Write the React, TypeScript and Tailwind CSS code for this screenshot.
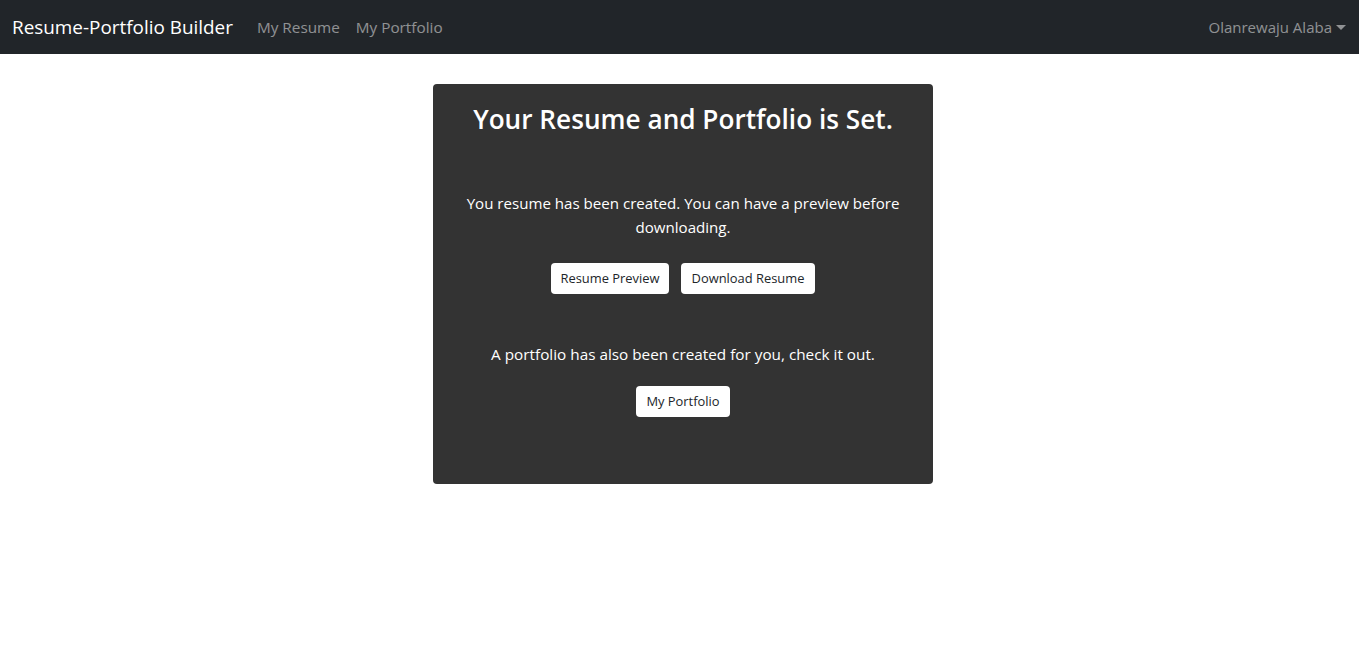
import { FC } from 'react';

const App: FC = () => {
  return (
    <div className="min-h-screen bg-white font-['Open_Sans',sans-serif] text-[#212529]">
      <nav className="flex h-[54px] items-center justify-between bg-[#212529] pl-3 pr-[13px]">
        <div className="flex items-center">
          <a className="mr-[24px] text-[18.9px] text-white">Resume-Portfolio Builder</a>
          <a className="mr-[16px] text-[15.3px] text-white/50">My Resume</a>
          <a className="text-[15.3px] text-white/50">My Portfolio</a>
        </div>
        <button className="flex items-center text-[15px] text-white/50">
          Olanrewaju Alaba
          <svg className="ml-[4px] h-[5px] w-[10px]" viewBox="0 0 10 5">
            <path d="M0 0h10L5 5z" fill="currentColor" />
          </svg>
        </button>
      </nav>

      <div className="flex justify-center pt-[30px] pl-[7px]">
        <div className="flex h-[400px] w-[500px] flex-col items-center rounded bg-[#333333] pt-4 text-white">
          <h2 className="text-[26.2px] leading-[38px] font-semibold">Your Resume and Portfolio is Set.</h2>
          <p className="mt-[53px] px-[30px] text-center text-[15.1px] leading-6">
            You resume has been created. You can have a preview before downloading.
          </p>
          <div className="mt-6 flex gap-3">
            <button className="h-[31px] w-[118px] rounded bg-white text-[12.9px] text-[#212529]">Resume Preview</button>
            <button className="h-[31px] w-[134px] rounded bg-white text-[12.9px] text-[#212529]">Download Resume</button>
          </div>
          <p className="mt-12 text-[15.3px] leading-6">A portfolio has also been created for you, check it out.</p>
          <button className="mt-5 h-[31px] w-[94px] rounded bg-white text-[12.9px] text-[#212529]">My Portfolio</button>
        </div>
      </div>
    </div>
  );
};

export default App;
